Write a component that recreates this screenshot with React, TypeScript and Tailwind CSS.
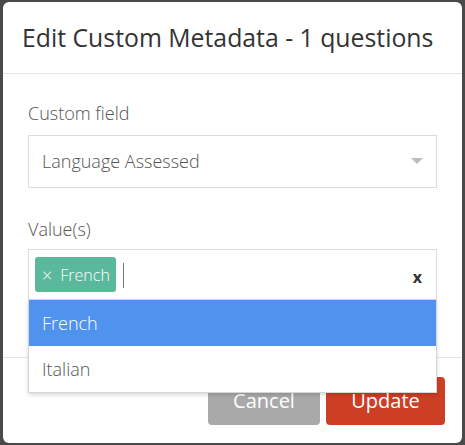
import React from "react";

const font = { fontFamily: '"Open Sans", "Noto Sans", sans-serif' };

export default function App() {
    return (
        <div className="w-[465px] h-[445px] bg-[#4a4a4a] pt-[2px] px-[3px] overflow-hidden" style={font}>
            <div className="bg-white rounded-md h-[441px] flex flex-col">
                <div className="h-[72px] border-b border-[#e5e5e5] flex items-center pl-[19px]">
                    <h1 className="text-[24.8px] text-[#333] leading-none pb-[1px]">
                        Edit Custom Metadata - 1 questions
                    </h1>
                </div>

                <div className="px-[25px] pt-[26px] h-[284px] border-b border-[#e5e5e5]">
                    <label className="block text-[18px] font-light text-[#555] leading-[26px] mb-[9px]">
                        Custom field
                    </label>
                    <div className="h-[53px] border border-[#dcdcdc] flex items-center justify-between pl-[13px] pr-[13px]">
                        <span className="text-[18px] font-light text-[#555]">Language Assessed</span>
                        <span className="w-0 h-0 border-l-[6px] border-r-[6px] border-t-[6px] border-l-transparent border-r-transparent border-t-[#bdbdbd] mt-[-2px]" />
                    </div>

                    <label className="block text-[18px] font-light text-[#555] leading-[26px] mt-[28px] mb-[7px]">
                        Value(s)
                    </label>
                    <div className="relative">
                        <div className="h-[51px] border border-[#dcdcdc] flex items-start pl-[6px] pr-[14px] pt-[7px]">
                            <span className="h-[35px] rounded-[3px] bg-[#5bb99b] text-white text-[16px] font-light flex items-center pl-[7px] pr-[6px] gap-[8px]">
                                <span className="text-[18px] leading-none">×</span>
                                <span>French</span>
                            </span>
                            <span className="w-[1px] h-[25px] bg-[#777] ml-[7px] mt-[6px]" />
                            <span className="ml-auto mt-[12px] text-[16px] font-bold text-[#333] leading-none">x</span>
                        </div>
                        <div className="absolute left-0 right-0 top-[50px] bg-white border border-[#d6d6d6] shadow-[0_2px_4px_rgba(0,0,0,0.15)] z-10">
                            <div className="h-[46px] bg-[#4f93ef] text-white text-[18px] font-light flex items-center pl-[13px]">
                                French
                            </div>
                            <div className="h-[46px] text-[#555] text-[18px] font-light flex items-center pl-[13px]">
                                Italian
                            </div>
                        </div>
                    </div>
                </div>

                <div className="flex justify-end gap-[6px] pt-[19px] pr-[17px]">
                    <button className="w-[112px] h-[48px] rounded-[4px] bg-[#a9a9a9] text-white text-[20px]">
                        Cancel
                    </button>
                    <button className="w-[119px] h-[48px] rounded-[4px] bg-[#cc3f25] text-white text-[20px]">
                        Update
                    </button>
                </div>
            </div>
        </div>
    );
}
